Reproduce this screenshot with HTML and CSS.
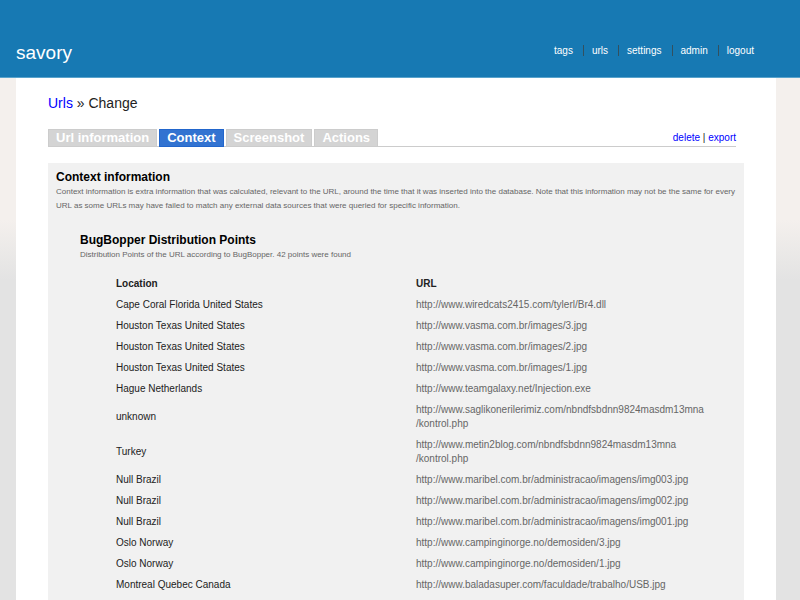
FILE: index.html
```html
<!DOCTYPE html>
<html lang="en">
<head>
<meta charset="utf-8">
<title>savory</title>
<link rel="stylesheet" href="styles.css">
</head>
<body>
<header class="site-header">
  <a class="brand" href="#">savory</a>
  <nav class="site-nav">
    <a href="#">tags</a>
    <a href="#">urls</a>
    <a href="#">settings</a>
    <a href="#">admin</a>
    <a href="#">logout</a>
  </nav>
</header>
<main class="page">
  <h1 class="crumbs"><a href="#">Urls</a> » Change</h1>
  <div class="tab-bar">
    <nav class="tabs">
      <a class="tab" href="#">Url information</a>
      <a class="tab active" href="#">Context</a>
      <a class="tab" href="#">Screenshot</a>
      <a class="tab" href="#">Actions</a>
    </nav>
    <div class="actions"><a href="#">delete</a> | <a href="#">export</a></div>
  </div>
  <section class="panel">
    <h2>Context information</h2>
    <p class="note">Context information is extra information that was calculated, relevant to the URL, around the time that it was inserted into the database. Note that this information may not be the same for every URL as some URLs may have failed to match any external data sources that were queried for specific information.</p>
    <section class="source">
      <h2>BugBopper Distribution Points</h2>
      <p class="note">Distribution Points of the URL according to BugBopper. 42 points were found</p>
      <table class="points">
        <thead>
          <tr><th>Location</th><th>URL</th></tr>
        </thead>
        <tbody>
          <tr><td>Cape Coral Florida United States</td><td>http://www.wiredcats2415.com/tylerl/Br4.dll</td></tr>
          <tr><td>Houston Texas United States</td><td>http://www.vasma.com.br/images/3.jpg</td></tr>
          <tr><td>Houston Texas United States</td><td>http://www.vasma.com.br/images/2.jpg</td></tr>
          <tr><td>Houston Texas United States</td><td>http://www.vasma.com.br/images/1.jpg</td></tr>
          <tr><td>Hague Netherlands</td><td>http://www.teamgalaxy.net/Injection.exe</td></tr>
          <tr><td>unknown</td><td>http://www.saglikonerilerimiz.com/nbndfsbdnn9824masdm13mna<br>/kontrol.php</td></tr>
          <tr><td>Turkey</td><td>http://www.metin2blog.com/nbndfsbdnn9824masdm13mna<br>/kontrol.php</td></tr>
          <tr><td>Null Brazil</td><td>http://www.maribel.com.br/administracao/imagens/img003.jpg</td></tr>
          <tr><td>Null Brazil</td><td>http://www.maribel.com.br/administracao/imagens/img002.jpg</td></tr>
          <tr><td>Null Brazil</td><td>http://www.maribel.com.br/administracao/imagens/img001.jpg</td></tr>
          <tr><td>Oslo Norway</td><td>http://www.campinginorge.no/demosiden/3.jpg</td></tr>
          <tr><td>Oslo Norway</td><td>http://www.campinginorge.no/demosiden/1.jpg</td></tr>
          <tr><td>Montreal Quebec Canada</td><td>http://www.baladasuper.com/faculdade/trabalho/USB.jpg</td></tr>
        </tbody>
      </table>
    </section>
  </section>
</main>
</body>
</html>
```
FILE: styles.css
```css
* {
  box-sizing: border-box;
}

body {
  margin: 0;
  background: #e3e3e3 linear-gradient(#f4f0ed 220px, #e3e3e3 280px);
  color: #222;
  font: 10px/14px "Liberation Sans", Arial, sans-serif;
}

a {
  color: #00f;
  text-decoration: none;
}

.site-header {
  display: flex;
  justify-content: space-between;
  align-items: center;
  padding: 40px 36px 12px 16px;
  background: #1779b3;
  border-bottom: 1px solid #59a3cc;
}

.brand {
  color: #fff;
  font-size: 19px;
  line-height: 25px;
}

.site-nav {
  display: flex;
  padding-bottom: 4px;
}

.site-nav a {
  padding: 0 10px 0 8px;
  border-left: 1px solid #33505f;
  color: #fff;
  line-height: 11px;
}

.site-nav a:first-child {
  border-left: 0;
}

.page {
  margin: 0 24px 0 16px;
  padding: 16px 32px 0;
  background: #fff;
}

h1,
h2,
p {
  margin: 0;
}

.crumbs {
  font-size: 14px;
  line-height: 18px;
  font-weight: normal;
}

.tab-bar {
  display: flex;
  justify-content: space-between;
  margin: 17px 8px 16px 0;
  border-bottom: 1px solid #ccc;
}

.tabs,
.actions {
  margin-bottom: -1px;
}

.tabs {
  display: flex;
  gap: 2px;
}

.tab {
  padding: 0 7px;
  border: 1px solid #ccc;
  background: #d4d4d4;
  color: #fff;
  font-size: 13px;
  line-height: 16px;
  font-weight: bold;
}

.tab.active {
  border-color: #2266cc;
  background: #3273d1;
}

.actions {
  line-height: 18px;
}

.panel {
  padding: 7px 8px 16px;
  background: #f1f1f1;
}

h2 {
  color: #000;
  font-size: 12px;
  line-height: 15px;
}

.note {
  color: #666;
  font-size: 8px;
  line-height: 14px;
}

.source {
  padding: 20px 0 0 24px;
}

.points {
  width: 600px;
  max-width: 100%;
  margin: 12px 0 0 32px;
  border-collapse: collapse;
  table-layout: fixed;
}

.points th,
.points td {
  padding: 3px 4px 4px;
  text-align: left;
  vertical-align: middle;
}

.points td:last-child {
  color: #666;
}
```
